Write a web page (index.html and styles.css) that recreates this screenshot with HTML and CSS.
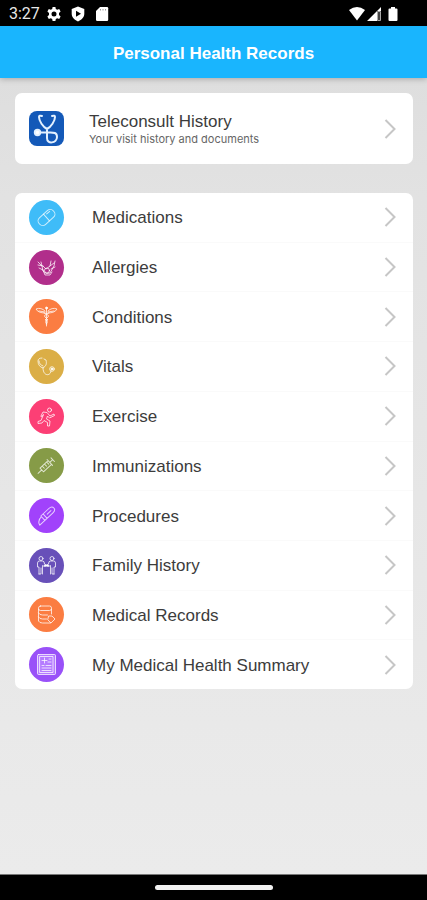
FILE: index.html
```html
<!DOCTYPE html>
<html lang="en">
<head>
<meta charset="utf-8">
<meta name="viewport" content="width=device-width, initial-scale=1">
<title>Personal Health Records</title>
<link rel="stylesheet" href="styles.css">
</head>
<body>
<svg class="defs" aria-hidden="true"><symbol id="chevron" viewBox="0 0 12 20"><path d="M1.500 1l9 9-9 9"/></symbol></svg>
<div class="status">
  <span class="time">3:27</span>
  <svg class="status-icon" viewBox="0 0 16 16" aria-hidden="true"><path fill-rule="evenodd" d="M6.600 1h2.800l.4 2 1.400.8 2-.7 1.400 2.400L13 6.900v2.200l1.600 1.400-1.400 2.400-2-.7-1.400.8-.4 2H6.600l-.4-2-1.400-.8-2 .7-1.400-2.400L3 9.100V6.900L1.400 5.500l1.400-2.400 2 .7L6.200 3zM8 5.500a2.500 2.500 0 1 0 0 5 2.500 2.500 0 0 0 0-5z"/></svg>
  <svg class="status-icon" viewBox="0 0 16 16" aria-hidden="true"><path fill-rule="evenodd" d="M8 .6l6.300 2.400v4.800c0 3.500-2.600 6-6.300 7.600-3.700-1.600-6.300-4.100-6.300-7.600V3zM6 4.700v6l5-3z"/></svg>
  <svg class="status-icon" viewBox="0 0 16 16" aria-hidden="true"><path d="M6 1h7q1.200 0 1.200 1.200v11.600q0 1.200-1.200 1.200H3.200Q2 15 2 13.800V5z"/><path d="M6.500 3v1.500M9 3v1.500M11.500 3v1.500" stroke="#999"/></svg>
  <span class="signals">
    <svg class="status-icon" viewBox="0 0 16 16" aria-hidden="true"><path d="M0 4Q8-2 16 4L8 14.500z"/></svg>
    <svg class="status-icon" viewBox="0 0 16 16" aria-hidden="true"><path d="M1 15L15 1v4h-4v10z"/><path d="M11.500 5.500h3v9h-3z" fill="#444" stroke="#aaa"/></svg>
    <svg class="status-icon battery" viewBox="0 0 16 16" aria-hidden="true"><path d="M6 1h4v1.500h1.500q1 0 1 1V14q0 1-1 1h-7q-1 0-1-1V3.500q0-1 1-1H6z"/></svg>
  </span>
</div>
<header class="bar"><h1>Personal Health Records</h1></header>
<main>
  <a class="card featured" href="#teleconsult">
    <svg class="icon app" viewBox="0 0 35 35" aria-hidden="true">
      <path d="M13 5q-3-1-3 1c0 4 4 10 8 12 4-2 8-8 8-12q0-2-3-1M18 18v9c0 7 10 5 10-1 0-5-4-4.500-8-4.500H9"/><circle cx="8.500" cy="21.500" r="2.700" class="solid"/>
    </svg>
    <span class="copy"><span class="title">Teleconsult History</span><span class="sub">Your visit history and documents</span></span>
    <svg class="chevron" aria-hidden="true"><use href="#chevron"/></svg>
  </a>
  <nav class="card list" aria-label="Health records">
    <a class="row" href="#medications"><svg class="icon sky" viewBox="0 0 35 35" aria-hidden="true"><g transform="rotate(-42 17.500 17.500)"><rect x="8" y="13" width="19" height="9" rx="4"/><path d="M17.500 13v9M20 15h4"/></g></svg><span class="title">Medications</span><svg class="chevron" aria-hidden="true"><use href="#chevron"/></svg></a>
    <a class="row" href="#allergies"><svg class="icon plum" viewBox="0 0 35 35" aria-hidden="true"><path d="M9 12l4 4 1 5q3 4 7 2l4-7 1-5M9 15l5 1M12 12l1 4M10 18l4 2M22 11l-1 5-4 3-3-3M25 13l-4 3M26 17l-4 2M14 20l2 5h5l2-3"/><circle cx="18" cy="20.500" r="2.500"/></svg><span class="title">Allergies</span><svg class="chevron" aria-hidden="true"><use href="#chevron"/></svg></a>
    <a class="row" href="#conditions"><svg class="icon orange" viewBox="0 0 35 35" aria-hidden="true"><path d="M17.500 9v18M16 12Q12 8 7 10q2 4 9 4M19 12q4-4 9-2-2 4-9 4M10 12l6 1M25 12l-6 1M15 14q6 2 4 4t-3 3q4 1 1.500 4M20 14q-6 2-4 4t3 3q-4 1-1.500 4"/><circle cx="17.500" cy="9" r="1" class="solid"/></svg><span class="title">Conditions</span><svg class="chevron" aria-hidden="true"><use href="#chevron"/></svg></a>
    <a class="row" href="#vitals"><svg class="icon gold" viewBox="0 0 35 35" aria-hidden="true"><path d="M13 9q-4 0-4 3c0 4 2 6 5 7 3-2 4-4 3-8l-2-1M14 19c0 9 8 8 8 3M10 12c0 3 2 4 4 5"/><circle cx="23" cy="20" r="2.300"/><circle cx="23" cy="20" r="1" class="solid"/></svg><span class="title">Vitals</span><svg class="chevron" aria-hidden="true"><use href="#chevron"/></svg></a>
    <a class="row" href="#exercise"><svg class="icon pink" viewBox="0 0 35 35" aria-hidden="true"><circle cx="20.500" cy="11" r="2"/><path d="M12 17l2-4 4 .5 3 3.500 4-2 .5 1.500-5 2.500-2-2-1 3 3.500 2-.5 5h-2v-3.500l-3.500-2-2 2.500-4 .5v-2l3-1 2.500-6-1.500 2z"/></svg><span class="title">Exercise</span><svg class="chevron" aria-hidden="true"><use href="#chevron"/></svg></a>
    <a class="row" href="#immunizations"><svg class="icon olive" viewBox="0 0 35 35" aria-hidden="true"><g transform="rotate(-43 17.500 17.500)"><path d="M6 17.500h5M11 15h11v5H11zM22 17.500h4M26 15v5M22 13.500v8M14 15v3M17 15v3M20 15v3"/></g></svg><span class="title">Immunizations</span><svg class="chevron" aria-hidden="true"><use href="#chevron"/></svg></a>
    <a class="row" href="#procedures"><svg class="icon violet" viewBox="0 0 35 35" aria-hidden="true"><g transform="rotate(-43 17.500 17.500)"><path d="M6 20q1-5 7-5v5zM13 14h11q4 0 4 3t-4 3H13zM16 14v6M19 17h5"/></g></svg><span class="title">Procedures</span><svg class="chevron" aria-hidden="true"><use href="#chevron"/></svg></a>
    <a class="row" href="#family"><svg class="icon indigo" viewBox="0 0 35 35" aria-hidden="true"><circle cx="12" cy="10.500" r="2"/><circle cx="23" cy="10.500" r="2"/><path d="M10 26v-7H8.500v-4q0-2 2-2h3q2 0 2 3l2 1.500-2 1-2-1V26M12 20v6h-2M25 26v-7h1.500v-4q0-2-2-2h-3q-2 0-2 3l-2 1.500 2 1 2-1V26M23 20v6h2"/><path d="M16 17.500h3" class="strong"/></svg><span class="title">Family History</span><svg class="chevron" aria-hidden="true"><use href="#chevron"/></svg></a>
    <a class="row" href="#records"><svg class="icon orange" viewBox="0 0 35 35" aria-hidden="true"><rect x="9.500" y="9" width="13" height="4.500" rx="2"/><path d="M9.500 12v12q1 2 4 2h8M22.500 12v5M9.500 16q1 2 4 2h5M9.500 20q1 2 4 2h4M20 19h3l3 3-4 4-3-3z"/></svg><span class="title">Medical Records</span><svg class="chevron" aria-hidden="true"><use href="#chevron"/></svg></a>
    <a class="row" href="#summary"><svg class="icon purple" viewBox="0 0 35 35" aria-hidden="true"><rect x="8.500" y="7.500" width="18" height="20" rx="1" class="sheet"/><rect x="11" y="9.500" width="13" height="16"/><path d="M15.500 11v5M13 13.500h5M20 12h2M19 15h3M13 18.500h2M17 18.500h5M13 21h9M13 23.500h9"/></svg><span class="title">My Medical Health Summary</span><svg class="chevron" aria-hidden="true"><use href="#chevron"/></svg></a>
  </nav>
</main>
<footer class="system"><span class="handle"></span></footer>
</body>
</html>
```
FILE: styles.css
```css
* { box-sizing: border-box; }
body {
  margin: 0;
  min-height: 100vh;
  display: flex;
  flex-direction: column;
  font-family: "Liberation Sans", Arial, sans-serif;
  background: #e7e7e7;
  color: #3c3c3c;
}
.defs { position: absolute; width: 0; height: 0; }
.status {
  display: flex;
  align-items: center;
  gap: 8px;
  height: 26px;
  padding: 1px 26px 0 9px;
  background: #000;
  color: #e8e8e8;
}
.time { font: 16px Roboto, sans-serif; margin-right: -2px; }
.status-icon { width: 16px; height: 16px; fill: #fff; }
.signals { display: flex; gap: 1px; margin-left: auto; }
.battery { margin-left: 2px; }
.bar {
  position: relative;
  display: grid;
  place-items: center;
  height: 52px;
  padding-top: 4px;
  background: #19b5fe;
  color: #fff;
  box-shadow: 0 1px 6px rgba(0, 0, 0, .25);
}
h1 { margin: 0; font-size: 17px; line-height: 20px; }
main {
  flex: 1;
  display: flex;
  flex-direction: column;
  gap: 29px;
  padding: 15px 14px 185px 15px;
  background: linear-gradient(#dedede, #e2e2e2 15%, #ebebeb);
}
.card { background: #fff; border-radius: 7px; }
a { color: inherit; text-decoration: none; }
.featured {
  display: flex;
  align-items: center;
  gap: 25px;
  min-height: 71px;
  padding: 0 17px 0 14px;
}
.copy { flex: 1; display: flex; flex-direction: column; }
.title { font-size: 17px; line-height: 20px; }
.sub { font-family: Inter, "Liberation Sans", sans-serif; font-size: 11px; line-height: 14px; color: #666; }
.list { flex: 1; display: flex; flex-direction: column; }
.row {
  flex: 1;
  min-height: 48px;
  display: flex;
  align-items: center;
  gap: 28px;
  padding: 0 17px 0 14px;
}
.row + .row { border-top: 1px solid #fafafa; }
.row .title { flex: 1; padding-top: 2px; }
.icon {
  flex: none;
  width: 35px;
  height: 35px;
  border-radius: 50%;
  fill: none;
  stroke: rgba(255, 255, 255, .75);
  stroke-linecap: round;
  stroke-linejoin: round;
}
.icon .solid { fill: #fff; }
.icon .strong { stroke: #fff; stroke-width: 2; }
.icon .sheet { fill: #b57cff; }
.app { border-radius: 8px; background: #1459b8; stroke: #e4f1ff; stroke-width: 2; }
.sky { background: #3fbcf8; }
.plum { background: #b12e8b; }
.orange { background: #fb7d42; }
.gold { background: #dbae46; }
.pink { background: #fc3f75; }
.olive { background: #869b47; }
.violet { background: #a142fb; }
.indigo { background: #6850b9; }
.purple { background: #9951f8; }
.chevron {
  flex: none;
  width: 12px;
  height: 20px;
  fill: none;
  stroke: #c6c6c6;
  stroke-width: 2;
}
.system {
  display: grid;
  place-items: center;
  height: 26px;
  background: #000;
  border-top: 1px solid #777;
}
.handle { width: 118px; height: 5px; border-radius: 3px; background: #f2f2f2; }
```
